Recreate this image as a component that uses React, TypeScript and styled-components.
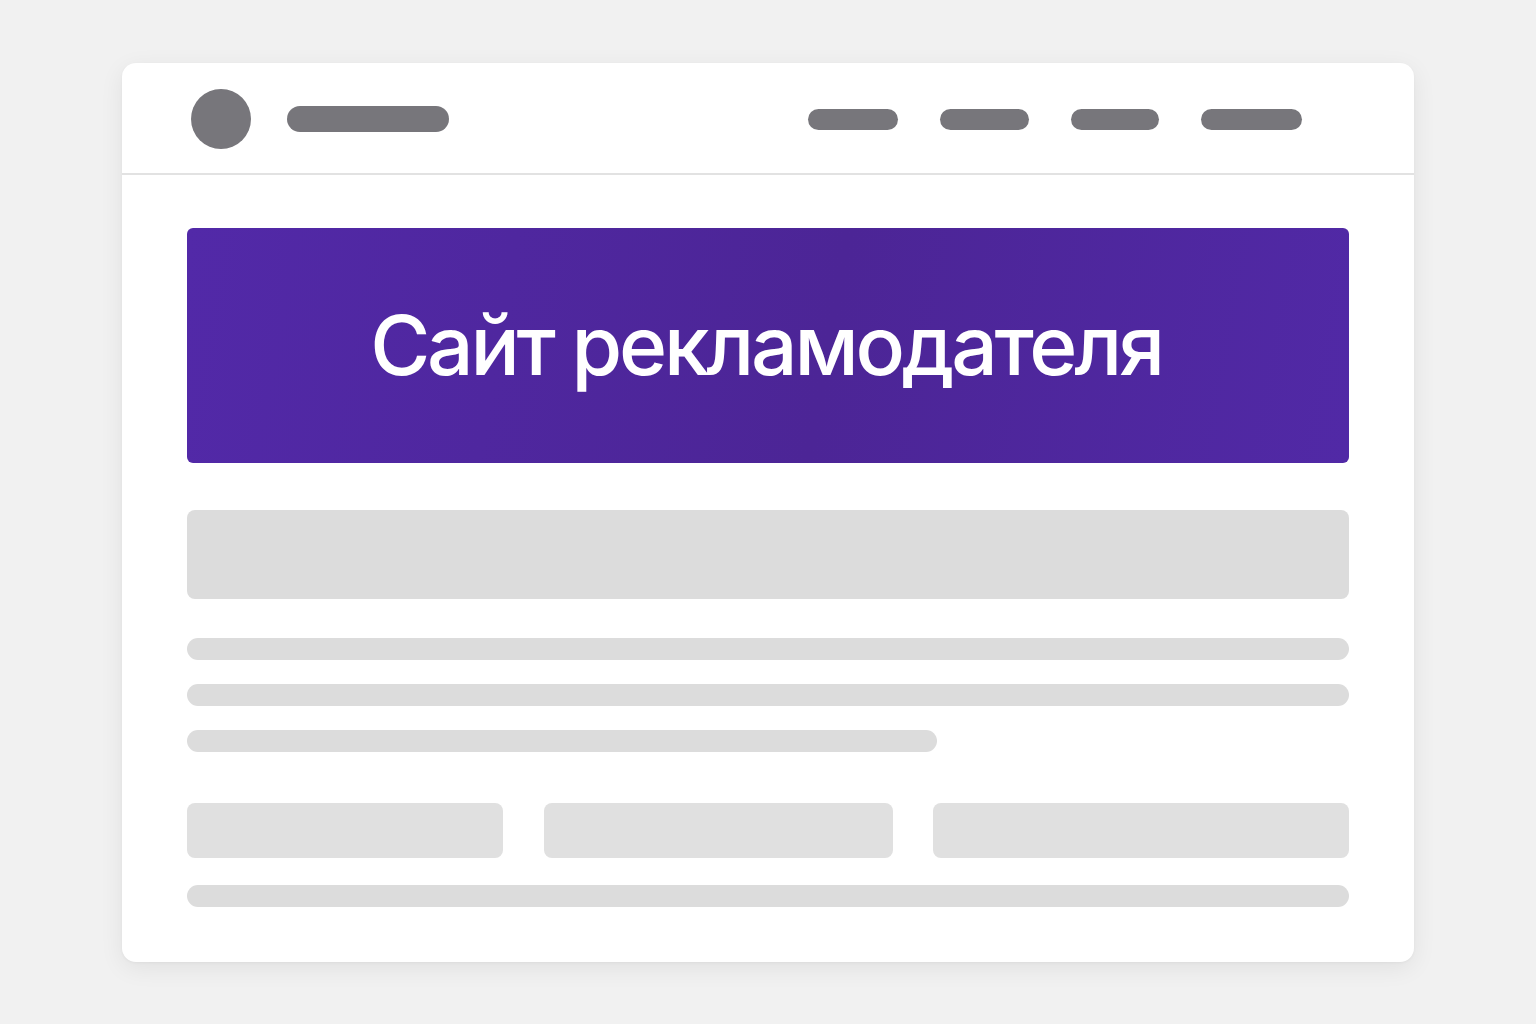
import styled, { createGlobalStyle } from 'styled-components';

const Global = createGlobalStyle`
  html, body {
    margin: 0;
    padding: 0;
    background: #f1f1f1;
  }
  body {
    font-family: Inter, "Noto Sans", sans-serif;
  }
`;

const Page = styled.div`
  width: 1536px;
  height: 1024px;
  padding-top: 63px;
  box-sizing: border-box;
  display: flex;
  justify-content: center;
`;

const Card = styled.div`
  width: 1292px;
  height: 899px;
  background: #ffffff;
  border-radius: 14px;
  box-shadow: 0 6px 24px rgba(0, 0, 0, 0.07), 0 1px 3px rgba(0, 0, 0, 0.04);
  overflow: hidden;
`;

const Header = styled.header`
  height: 112px;
  box-sizing: border-box;
  border-bottom: 2px solid #e2e2e2;
  display: flex;
  align-items: center;
  padding: 2px 112px 0 69px;
`;

const Logo = styled.div`
  width: 60px;
  height: 60px;
  border-radius: 50%;
  background: #77767b;
`;

const Brand = styled.div`
  width: 162px;
  height: 26px;
  border-radius: 13px;
  background: #77767b;
  margin-left: 36px;
`;

const Nav = styled.nav`
  margin-left: auto;
  display: flex;
  align-items: center;
  gap: 42px;
`;

const NavItem = styled.div<{ $w: number }>`
  width: ${(p) => p.$w}px;
  height: 21px;
  border-radius: 11px;
  background: #77767b;
`;

const Body = styled.main`
  padding: 53px 65px 0;
  display: flex;
  flex-direction: column;
`;

const Banner = styled.section`
  height: 235px;
  border-radius: 6px;
  background: linear-gradient(100deg, #5229a8 0%, #4c2596 55%, #5129a6 100%);
  display: flex;
  align-items: center;
  justify-content: center;
`;

const Title = styled.h1`
  margin: 0 0 0 -4px;
  color: #ffffff;
  font-family: Inter, "Noto Sans", sans-serif;
  font-weight: 500;
  font-size: 82px;
  letter-spacing: -3.2px;
  line-height: 1;
`;

const Block = styled.div`
  height: 89px;
  margin-top: 47px;
  border-radius: 8px;
  background: #dcdcdc;
`;

const Line = styled.div<{ $w?: number; $top: number }>`
  height: 22px;
  width: ${(p) => (p.$w ? `${p.$w}px` : '100%')};
  margin-top: ${(p) => p.$top}px;
  border-radius: 11px;
  background: #dcdcdc;
`;

const Tiles = styled.div`
  display: grid;
  grid-template-columns: 316px 349px 1fr;
  column-gap: 40.5px;
  margin-top: 51px;
`;

const Tile = styled.div`
  height: 55px;
  border-radius: 8px;
  background: #e0e0e0;
`;

const App = () => {
  return (
    <>
      <Global />
      <Page>
        <Card>
          <Header>
            <Logo />
            <Brand />
            <Nav>
              <NavItem $w={90} />
              <NavItem $w={89} />
              <NavItem $w={88} />
              <NavItem $w={101} />
            </Nav>
          </Header>
          <Body>
            <Banner>
              <Title>Сайт рекламодателя</Title>
            </Banner>
            <Block />
            <Line $top={39} />
            <Line $top={24} />
            <Line $top={24} $w={750} />
            <Tiles>
              <Tile />
              <Tile />
              <Tile />
            </Tiles>
            <Line $top={27} />
          </Body>
        </Card>
      </Page>
    </>
  );
};

export default App;
